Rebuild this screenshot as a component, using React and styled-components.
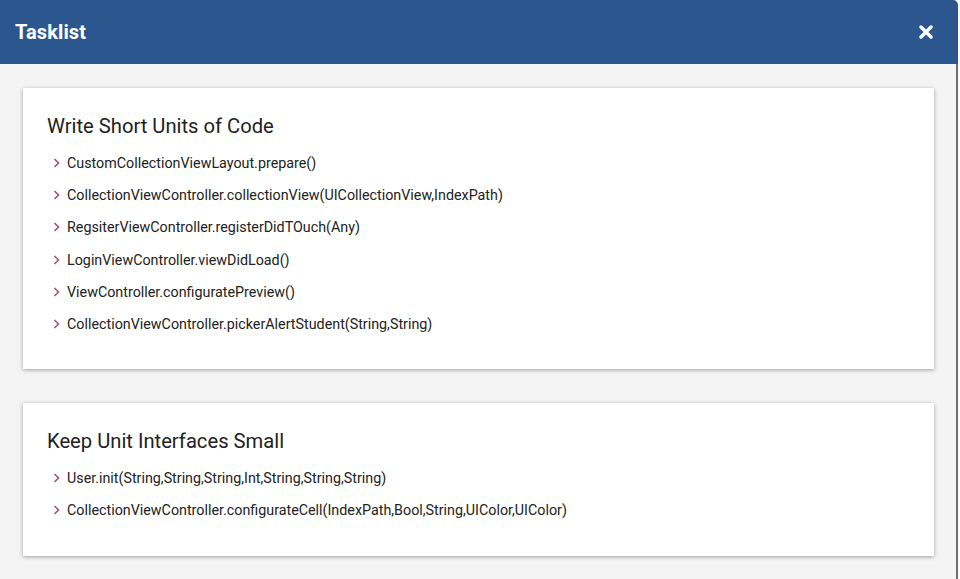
import styled, { createGlobalStyle } from 'styled-components';

const GlobalStyle = createGlobalStyle`
	html, body {
		margin: 0;
		padding: 0;
		background: #ffffff;
		font-family: Roboto, 'Liberation Sans', sans-serif;
	}
`;

const groups = [
	{
		title: 'Write Short Units of Code',
		items: [
			'CustomCollectionViewLayout.prepare()',
			'CollectionViewController.collectionView(UICollectionView,IndexPath)',
			'RegsiterViewController.registerDidTOuch(Any)',
			'LoginViewController.viewDidLoad()',
			'ViewController.configuratePreview()',
			'CollectionViewController.pickerAlertStudent(String,String)',
		],
	},
	{
		title: 'Keep Unit Interfaces Small',
		items: [
			'User.init(String,String,String,Int,String,String,String)',
			'CollectionViewController.configurateCell(IndexPath,Bool,String,UIColor,UIColor)',
		],
	},
];

const Chevron = () => (
	<svg width='8' height='10' viewBox='0 0 8 10' aria-hidden='true'>
		<path d='M1.5 1 L5.5 5 L1.5 9' fill='none' stroke='#a3506c' strokeWidth='1.6' />
	</svg>
);

const CloseIcon = () => (
	<svg width='14' height='14' viewBox='0 0 14 14' aria-hidden='true'>
		<path d='M2 2 L12 12 M12 2 L2 12' stroke='#ffffff' strokeWidth='3.4' strokeLinecap='round' />
	</svg>
);

const App = () => {
	return (
		<>
			<GlobalStyle />
			<Window>
				<Header>
					<h1>Tasklist</h1>
					<button className='close' aria-label='Close'>
						<CloseIcon />
					</button>
				</Header>
				<Body>
					{groups.map((group) => (
						<Card key={group.title}>
							<h2>{group.title}</h2>
							<ul>
								{group.items.map((item) => (
									<li key={item}>
										<Chevron />
										<span>{item}</span>
									</li>
								))}
							</ul>
						</Card>
					))}
				</Body>
			</Window>
		</>
	);
};

const Window = styled.div`
	width: 958px;
	height: 579px;
	display: flex;
	flex-direction: column;
	overflow: hidden;
	border-top-right-radius: 5px;
`;

const Header = styled.header`
	height: 64px;
	flex-shrink: 0;
	display: flex;
	align-items: center;
	justify-content: space-between;
	padding: 0 25px 0 15px;
	background-color: #2b578e;
	h1 {
		margin: 0;
		font-size: 20px;
		font-weight: 700;
		color: #ffffff;
		letter-spacing: 0.1px;
	}
	.close {
		display: flex;
		padding: 0;
		border: none;
		background: none;
		cursor: pointer;
	}
`;

const Body = styled.main`
	flex: 1;
	display: flex;
	flex-direction: column;
	gap: 34px;
	padding: 24px 22px 0 23px;
	background-color: #f4f4f4;
	border-right: 2px solid #6f6f6f;
`;

const Card = styled.section`
	background: #ffffff;
	padding: 26px 24px 29px;
	box-shadow: 0 1px 4px rgba(0, 0, 0, 0.35);
	h2 {
		margin: 0 0 9px;
		font-size: 20.2px;
		font-weight: 400;
		color: #222222;
	}
	ul {
		margin: 0;
		padding: 0;
		list-style: none;
	}
	li {
		height: 32.2px;
		display: flex;
		align-items: center;
		gap: 6px;
		padding-left: 6px;
		font-size: 14.3px;
		color: #222222;
	}
`;

export default App;
